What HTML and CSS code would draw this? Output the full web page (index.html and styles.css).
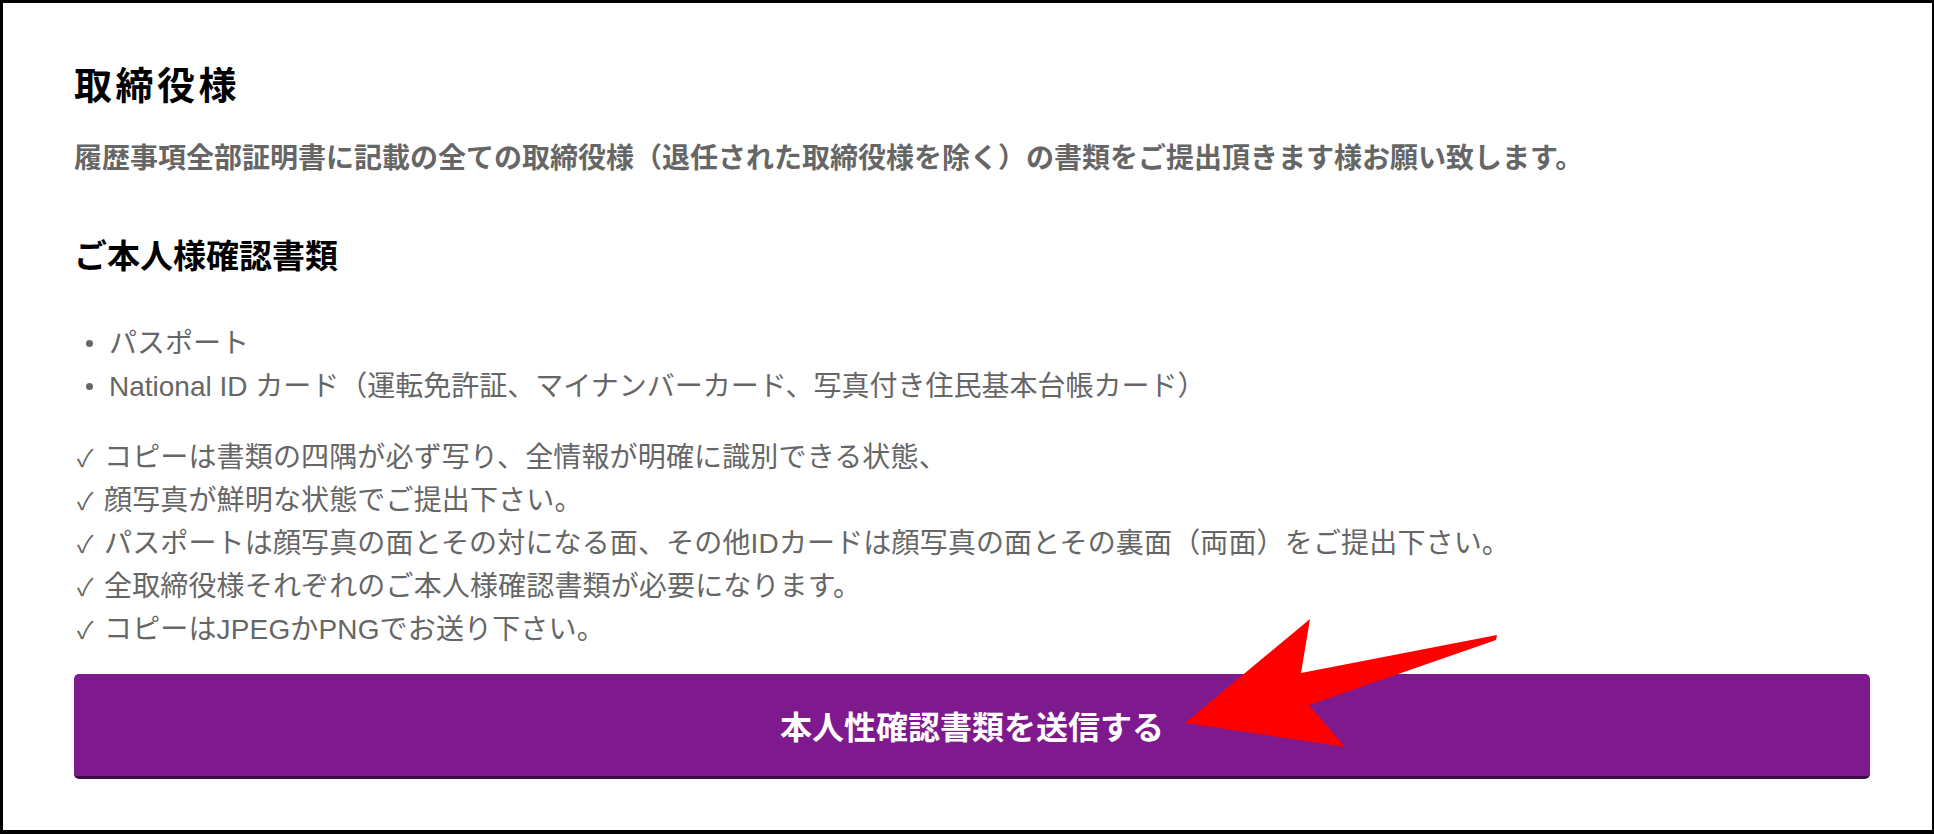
FILE: index.html
```html
<!DOCTYPE html>
<html lang="ja">
<head>
<meta charset="utf-8">
<title>取締役様</title>
<link rel="stylesheet" href="styles.css">
</head>
<body>
<div class="frame">
  <h1 class="title">取締役様</h1>
  <p class="lead">履歴事項全部証明書に記載の全ての取締役様（退任された取締役様を除く）の書類をご提出頂きます様お願い致します。</p>
  <h2 class="subtitle">ご本人様確認書類</h2>
  <ul class="docs">
    <li>パスポート</li>
    <li>National ID カード（運転免許証、マイナンバーカード、写真付き住民基本台帳カード）</li>
  </ul>
  <div class="checks">
    <p><span class="tick">✓</span>コピーは書類の四隅が必ず写り、全情報が明確に識別できる状態、</p>
    <p><span class="tick">✓</span>顔写真が鮮明な状態でご提出下さい。</p>
    <p><span class="tick">✓</span>パスポートは顔写真の面とその対になる面、その他IDカードは顔写真の面とその裏面（両面）をご提出下さい。</p>
    <p><span class="tick">✓</span>全取締役様それぞれのご本人様確認書類が必要になります。</p>
    <p><span class="tick">✓</span>コピーはJPEGかPNGでお送り下さい。</p>
  </div>
  <button class="submit" type="button">本人性確認書類を送信する</button>
  <svg class="arrow" width="1934" height="834" viewBox="0 0 1934 834" aria-hidden="true">
    <polygon points="1185,723 1310,619 1301,673 1497,635 1496,640 1309,705 1345,747" fill="#ff0000"/>
  </svg>
</div>
</body>
</html>
```
FILE: styles.css
```css
html, body {
  margin: 0;
  padding: 0;
  background: #ffffff;
}

body {
  font-family: "Liberation Sans", "Noto Sans CJK JP", sans-serif;
}

.frame {
  position: relative;
  box-sizing: border-box;
  width: 1934px;
  height: 834px;
  border-style: solid;
  border-color: #000000;
  border-width: 3px 2px 4px 3px;
  padding: 60px 63px 0 71px;
  display: flex;
  flex-direction: column;
  overflow: hidden;
}

.title {
  margin: 0;
  font-size: 38px;
  line-height: 46px;
  font-weight: 700;
  letter-spacing: 3.5px;
  color: #000000;
}

.lead {
  margin: 28px 0 0;
  font-size: 28px;
  line-height: 44px;
  font-weight: 700;
  color: #666666;
}

.subtitle {
  margin: 54px 0 0;
  font-size: 33px;
  line-height: 44px;
  font-weight: 700;
  color: #000000;
}

.docs {
  list-style: none;
  margin: 43px 0 0;
  padding: 0 0 0 12px;
}

.docs li {
  display: flex;
  align-items: center;
  font-size: 28px;
  line-height: 43px;
  color: #666666;
}

.docs li::before {
  content: "";
  width: 7px;
  height: 7px;
  border-radius: 50%;
  background: #666666;
  margin-right: 16px;
  flex: none;
}

.checks {
  margin-top: 28px;
  padding-left: 3px;
}

.checks p {
  margin: 0;
  height: 43px;
  font-size: 28px;
  line-height: 43px;
  color: #666666;
  white-space: nowrap;
  letter-spacing: 0.15px;
}

.tick {
  display: inline-block;
  font-size: 24px;
  line-height: 1;
  width: 27px;
}

.submit {
  margin-top: 23px;
  box-sizing: border-box;
  width: 1796px;
  height: 105px;
  flex: none;
  border: none;
  border-bottom: 3px solid #3a0a44;
  border-radius: 5px;
  background: #7e1a8e;
  color: #ffffff;
  font-family: "Liberation Sans", "Noto Sans CJK JP", sans-serif;
  font-size: 32px;
  font-weight: 700;
  padding: 0;
  cursor: pointer;
}

.arrow {
  position: absolute;
  left: -3px;
  top: -3px;
  pointer-events: none;
}
```
